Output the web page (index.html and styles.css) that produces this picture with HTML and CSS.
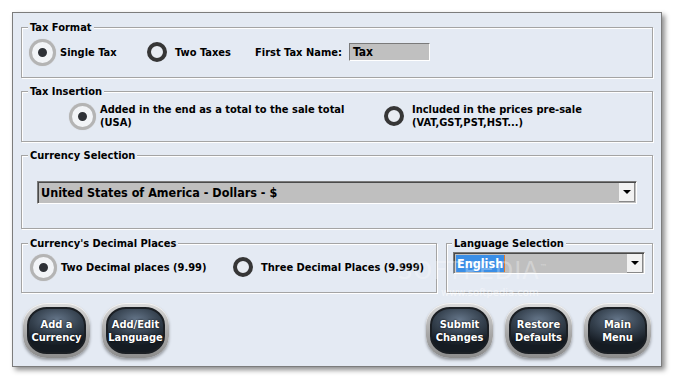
FILE: index.html
```html
<!DOCTYPE html>
<html lang="en">
<head>
  <meta charset="UTF-8">
  <meta name="viewport" content="width=device-width, initial-scale=1.0">
  <title>Tax and Currency Settings</title>
  <link rel="stylesheet" href="styles.css">
</head>
<body>

  <div class="window">

    <fieldset class="group tax-format">
      <legend>Tax Format</legend>
      <div class="row">
        <label class="radio single-tax checked"><span class="mark"><span class="dot"></span></span>Single Tax</label>
        <label class="radio two-taxes"><span class="mark"><span class="dot"></span></span>Two Taxes</label>
        <span class="field-label">First Tax Name:</span>
        <span class="textbox">Tax</span>
      </div>
    </fieldset>

    <fieldset class="group tax-insertion">
      <legend>Tax Insertion</legend>
      <div class="row">
        <label class="radio added checked"><span class="mark"><span class="dot"></span></span><span>Added in the end as a total to the sale total<br>(USA)</span></label>
        <label class="radio included"><span class="mark"><span class="dot"></span></span><span>Included in the prices pre-sale<br>(VAT,GST,PST,HST...)</span></label>
      </div>
    </fieldset>

    <fieldset class="group currency">
      <legend>Currency Selection</legend>
      <div class="group-body">
        <div class="combo combo-wide">
          <span class="combo-text">United States of America - Dollars - $</span>
          <span class="combo-arrow"></span>
        </div>
      </div>
    </fieldset>

    <div class="split">
      <fieldset class="group decimals">
        <legend>Currency's Decimal Places</legend>
        <div class="row">
          <label class="radio two-dec checked"><span class="mark"><span class="dot"></span></span>Two Decimal places (9.99)</label>
          <label class="radio"><span class="mark"><span class="dot"></span></span>Three Decimal Places (9.999)</label>
        </div>
      </fieldset>

      <fieldset class="group language">
        <legend>Language Selection</legend>
        <div class="group-body">
          <div class="combo combo-lang">
            <span class="combo-text"><span class="selected">English</span></span>
            <span class="combo-arrow"></span>
          </div>
        </div>
      </fieldset>
    </div>

    <div class="buttons">
      <div class="btn-group">
        <button class="btn"><span>Add a<br>Currency</span></button>
        <button class="btn"><span>Add/Edit<br>Language</span></button>
      </div>
      <div class="btn-group">
        <button class="btn"><span>Submit<br>Changes</span></button>
        <button class="btn"><span>Restore<br>Defaults</span></button>
        <button class="btn"><span>Main<br>Menu</span></button>
      </div>
    </div>

    <div class="watermark">SOFTPEDIA<sup>™</sup></div>
    <div class="watermark-url">www.softpedia.com</div>
  </div>

</body>
</html>
```

FILE: styles.css
```css
body {
  margin: 0;
  padding: 12px;
  background: #fff;
  font-family: "DejaVu Sans Condensed", "DejaVu Sans", sans-serif;
  font-weight: bold;
  font-size: 11px;
  color: #000;
}
.window {
  position: relative;
  width: 632px;
  height: 336px;
  padding: 8px 8px 9px 8px;
  background: #e4eaf3;
  border: 1px solid #7c7c7c;
  box-shadow: 3px 3px 5px rgba(0, 0, 0, 0.45);
  display: flex;
  flex-direction: column;
  gap: 7px;
}
.group {
  margin: 0;
  padding: 0;
  min-width: 0;
  border: 1px solid #a4a4a4;
  box-shadow: inset 1px 1px 0 #fff, 1px 1px 0 #fff;
}
.group legend {
  margin-left: 6px;
  padding: 0 2px;
  line-height: 13px;
  background: #e4eaf3;
}
.row {
  display: flex;
  align-items: center;
}
.radio {
  display: flex;
  align-items: center;
  line-height: 13px;
}
.mark {
  width: 24px;
  height: 24px;
  margin-right: 6px;
  display: flex;
  align-items: center;
  justify-content: center;
  flex: none;
}
.mark .dot {
  width: 12px;
  height: 12px;
  border: 4px solid #363636;
  border-radius: 50%;
  background: #e8ecf2;
}
.radio.checked .mark .dot {
  width: 9px;
  height: 9px;
  border: 6px solid #f2f4f7;
  background: #2e3136;
  box-shadow: 0 0 0 3px #b4b4b4, 0 0 1px 3px #c8c8c8;
}

/* tax format */
.tax-format .row {
  height: 36px;
  padding: 0 0 7px 8px;
}
.single-tax { width: 115px; }
.two-taxes { width: 110px; }
.field-label { width: 94px; }
.textbox {
  width: 76px;
  height: 16px;
  padding-left: 3px;
  font-size: 12px;
  line-height: 17px;
  background: #c0c0c0;
  border: 1px solid;
  border-color: #7a7a7a #fff #fff #7a7a7a;
}

/* tax insertion */
.tax-insertion .row {
  height: 36px;
  padding: 0 0 7px 48px;
}
.added { width: 312px; }

/* currency */
.currency .group-body {
  padding: 19px 15px 24px 15px;
}
.combo {
  display: flex;
  align-items: center;
  background: #bfbfbf;
  border: 1px solid;
  border-color: #7a7a7a #fff #fff #7a7a7a;
  box-shadow: inset 1px 1px 0 #4a4a4a;
}
.combo-wide {
  height: 21px;
  font-size: 12.5px;
}
.combo-text {
  flex: 1;
  padding-left: 3px;
}
.combo-arrow {
  width: 16px;
  height: 19px;
  margin-right: 1px;
  background: #f2f2f2;
  border-right: 1px solid #888;
  border-bottom: 1px solid #888;
  box-sizing: border-box;
  display: flex;
  align-items: center;
  justify-content: center;
}
.combo-arrow::after {
  content: "";
  border-left: 4px solid transparent;
  border-right: 4px solid transparent;
  border-top: 4px solid #000;
}

/* decimals and language */
.split {
  display: flex;
  gap: 9px;
  margin-top: 1px;
}
.decimals {
  width: 414px;
}
.decimals .row {
  height: 34px;
  padding: 0 0 8px 9px;
}
.two-dec { width: 200px; }
.language {
  flex: 1;
}
.language legend {
  margin-left: 5px;
}
.language .group-body {
  padding: 2px 7px 18px 6px;
}
.combo-lang {
  height: 20px;
  font-size: 12.5px;
}
.combo-lang .combo-text {
  padding-left: 2px;
}
.selected {
  display: inline-block;
  padding: 0 1px;
  line-height: 17px;
  color: #fff;
  background: #3a8ee6;
  border-right: 1px solid #e07a2a;
}

/* buttons */
.buttons {
  display: flex;
  justify-content: space-between;
  padding: 1px 2px 0 2px;
  margin-top: 2px;
}
.btn-group {
  display: flex;
  gap: 12px;
}
.btn {
  width: 67px;
  height: 55px;
  padding: 4px;
  border: none;
  border-radius: 24px / 22px;
  background: linear-gradient(#dcdcdc, #a8a8a8 55%, #8c8c8c);
  box-shadow: 0 2px 3px rgba(0, 0, 0, 0.35), inset 0 1px 0 #f4f4f4;
  font: inherit;
  cursor: pointer;
}
.btn span {
  display: flex;
  align-items: center;
  justify-content: center;
  height: 100%;
  box-sizing: border-box;
  border: 2px solid #1b1f24;
  border-radius: 20px / 18px;
  background: radial-gradient(ellipse 80% 60% at 50% 25%, #65768a, #34404d 55%, #151b22);
  color: #fff;
  font-size: 11px;
  line-height: 13px;
  text-align: center;
  text-shadow: 0 0 2px #000;
}

.watermark {
  position: absolute;
  left: 384px;
  top: 244px;
  font-family: "DejaVu Sans", sans-serif;
  font-size: 24px;
  font-weight: normal;
  letter-spacing: 1px;
  color: rgba(255, 255, 255, 0.3);
  pointer-events: none;
}
.watermark sup {
  font-size: 8px;
}
.watermark-url {
  position: absolute;
  left: 428px;
  top: 274px;
  font-family: "DejaVu Sans", sans-serif;
  font-size: 10px;
  font-weight: normal;
  color: rgba(255, 255, 255, 0.5);
  pointer-events: none;
}
```
